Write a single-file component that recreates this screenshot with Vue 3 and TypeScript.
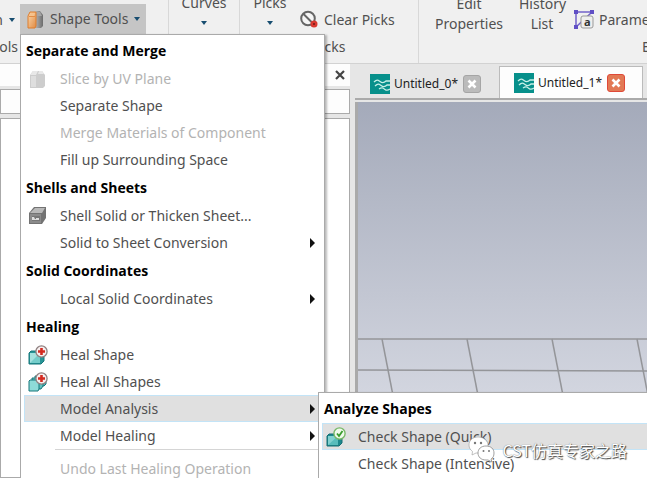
<script setup lang="ts">
import { ref } from 'vue'

interface MenuEntry {
  kind: 'heading' | 'item' | 'separator'
  label?: string
  icon?: 'slice' | 'shell' | 'heal' | 'healAll' | 'check'
  disabled?: boolean
  submenu?: MenuEntry[]
  arrow?: boolean
}

const analysisMenu: MenuEntry[] = [
  { kind: 'heading', label: 'Analyze Shapes' },
  { kind: 'item', label: 'Check Shape (Quick)', icon: 'check' },
  { kind: 'item', label: 'Check Shape (Intensive)' },
]

const shapeMenu: MenuEntry[] = [
  { kind: 'heading', label: 'Separate and Merge' },
  { kind: 'item', label: 'Slice by UV Plane', icon: 'slice', disabled: true },
  { kind: 'item', label: 'Separate Shape' },
  { kind: 'item', label: 'Merge Materials of Component', disabled: true },
  { kind: 'item', label: 'Fill up Surrounding Space' },
  { kind: 'heading', label: 'Shells and Sheets' },
  { kind: 'item', label: 'Shell Solid or Thicken Sheet...', icon: 'shell' },
  { kind: 'item', label: 'Solid to Sheet Conversion', arrow: true },
  { kind: 'heading', label: 'Solid Coordinates' },
  { kind: 'item', label: 'Local Solid Coordinates', arrow: true },
  { kind: 'heading', label: 'Healing' },
  { kind: 'item', label: 'Heal Shape', icon: 'heal' },
  { kind: 'item', label: 'Heal All Shapes', icon: 'healAll' },
  { kind: 'item', label: 'Model Analysis', arrow: true, submenu: analysisMenu },
  { kind: 'item', label: 'Model Healing', arrow: true },
  { kind: 'separator' },
  { kind: 'item', label: 'Undo Last Healing Operation', disabled: true },
]

const openItem = ref('Model Analysis')
const activeCheck = ref('Check Shape (Quick)')
const documents = ref(['Untitled_0*', 'Untitled_1*'])
const activeDocument = ref('Untitled_1*')
const filter = ref('')
const gridLines = [24, 109, 194, 279]
</script>

<template>
  <div class="app">
    <header class="ribbon">
      <section class="group shapes">
        <div class="tools">
          <button class="cut" type="button">n<i class="caret"></i></button>
          <div class="dropdown">
            <button class="shape-tools" type="button">
              <svg width="17" height="19" viewBox="0 0 17 19">
                <defs>
                  <linearGradient id="steel" x2="1"><stop stop-color="#b5b5b5" /><stop offset="1" stop-color="#6c6c6c" /></linearGradient>
                  <linearGradient id="amber" x2="1" y2="1"><stop stop-color="#fbd9ae" /><stop offset="1" stop-color="#e08a42" /></linearGradient>
                </defs>
                <path d="M9 1h4l3 4v11l-2 2H8z" fill="url(#steel)" />
                <path d="M10 2h3l2 4h-5z" fill="#a5a5a5" />
                <path d="M1 6l2-4h6v14l-1 2H1z" fill="url(#amber)" stroke="#dd7c2c" />
                <path d="M2 6l2-3h4L7 6z" fill="#f6c28c" />
                <path d="M2 6.500h6" stroke="#e38c45" />
              </svg>
              Shape Tools<i class="caret"></i>
            </button>
            <div class="menu" role="menu">
              <template v-for="(entry, n) in shapeMenu" :key="n">
                <h3 v-if="entry.kind === 'heading'">{{ entry.label }}</h3>
                <hr v-else-if="entry.kind === 'separator'" />
                <div v-else class="row">
                  <button
                    type="button"
                    role="menuitem"
                    class="item"
                    :class="{ active: entry.label === openItem }"
                    :disabled="entry.disabled"
                    @click="openItem = entry.label ?? ''"
                  >
                    <span class="icon">
                      <svg v-if="entry.icon === 'slice'" width="18" height="20" viewBox="0 0 18 20">
                        <path d="M2 6l3-4h9l3 4v11l-2 2H2z" fill="#cdcdcd" />
                        <path d="M2 6l3-4h5L8 6zM10 5l1-3h3l2 3z" fill="#e8e8e8" />
                        <path d="M3 7h5v11H3z" fill="#dedede" />
                      </svg>
                      <svg v-else-if="entry.icon === 'shell'" width="20" height="20" viewBox="0 0 20 20">
                        <path d="M1 7l5-6h12v11l-4 6H1z" fill="#737373" />
                        <path d="M2 7l5-5h10l-3 5z" fill="#b9b9b9" />
                        <path d="M2 8h11v9H2z" fill="#8b8b8b" />
                        <path d="M4 10h8v5H4z" fill="#777" />
                        <path d="M4 14v-3h2l1 2h1v-1h3v2z" fill="#ddd" />
                      </svg>
                      <svg v-else-if="entry.icon" width="20" height="20" viewBox="0 0 20 20">
                        <template v-if="entry.icon === 'healAll'">
                          <path d="M7 4h11v8l-2 2H7z" fill="#4cb5b5" stroke="#17777b" />
                          <path d="M4 6h11v8l-2 3H4z" fill="#5fc1bf" stroke="#17777b" />
                          <path d="M1 9l1-1h9v9l-1 2H1z" fill="#8edbd8" stroke="#17777b" />
                        </template>
                        <template v-else>
                          <path d="M1 8l2-2h13v10l-3 3H1z" fill="#279496" stroke="#17777b" />
                          <path d="M2 8h10v10H2z" fill="#75cdca" />
                          <path d="M2 18V8h10z" fill="#a5e2df" />
                        </template>
                        <circle cx="13.500" cy="6.500" r="5.600" fill="#f7eeee" stroke="#8e8080" stroke-width="1.300" />
                        <path d="M13.500 3v7M10 6.500h7" stroke="#d42a20" stroke-width="2.600" />
                      </svg>
                    </span>
                    <span class="text">{{ entry.label }}</span>
                    <i v-if="entry.arrow" class="arrow"></i>
                  </button>
                  <div v-if="entry.submenu && entry.label === openItem" class="menu submenu" role="menu">
                    <template v-for="sub in entry.submenu" :key="sub.label">
                      <h3 v-if="sub.kind === 'heading'">{{ sub.label }}</h3>
                      <button
                        v-else
                        type="button"
                        role="menuitem"
                        class="item"
                        :class="{ active: sub.label === activeCheck }"
                        @click="activeCheck = sub.label ?? ''"
                      >
                        <span class="icon">
                          <svg v-if="sub.icon" width="20" height="20" viewBox="0 0 20 20">
                            <path d="M1 9l2-2h13v9l-3 3H1z" fill="#1d888c" stroke="#176f75" />
                            <path d="M2 9h10v9H2z" fill="#58bcbc" />
                            <path d="M2 18V9h10z" fill="#82d1cf" />
                            <circle cx="13.500" cy="6.500" r="5.600" fill="#f0faeb" stroke="#78b868" stroke-width="1.400" />
                            <path d="M11 6.500l2 2.500 3.500-5" fill="none" stroke="#399c2c" stroke-width="1.800" />
                          </svg>
                        </span>
                        <span class="text">{{ sub.label }}</span>
                      </button>
                    </template>
                  </div>
                </div>
              </template>
            </div>
          </div>
        </div>
        <span class="caption">Tools</span>
      </section>
      <section class="group curves">
        <button class="tall" type="button">Curves<i class="caret"></i></button>
      </section>
      <section class="group picks">
        <div class="tools">
          <button class="tall" type="button">Picks<i class="caret"></i></button>
          <button class="wide" type="button">
            <svg width="19" height="19" viewBox="0 0 19 19">
              <circle cx="8" cy="8.500" r="6.800" fill="#f5f5f5" stroke="#666" stroke-width="2" />
              <path d="M3.500 4l9 9" stroke="#666" stroke-width="2" />
              <circle cx="14" cy="14" r="3.500" fill="#d93830" />
              <circle cx="14" cy="14" r="1" fill="#6b1717" />
            </svg>
            Clear Picks
          </button>
        </div>
        <span class="caption">Picks</span>
      </section>
      <section class="group edit">
        <div class="tools">
          <button class="tall properties" type="button">Edit<br />Properties</button>
          <button class="tall history" type="button">History<br />List</button>
          <button class="wide" type="button">
            <svg width="20" height="21" viewBox="0 0 20 21">
              <path d="M2 3h16L2 18z" fill="none" stroke="#7161c9" stroke-width="1.500" />
              <path d="M0 1h4v4H0zM16 1h4v4h-4zM0 16h4v4H0z" fill="#604fc5" />
              <rect x="7" y="7" width="12" height="12" rx="2" fill="#eee" stroke="#999" />
              <text x="10" y="17" class="glyph">a</text>
            </svg>
            Parameters
          </button>
        </div>
        <span class="caption">Edit</span>
      </section>
    </header>

    <main class="workspace">
      <aside class="panel">
        <div class="panel-title">
          <button type="button" aria-label="Close panel">
            <svg width="10" height="10" viewBox="0 0 10 10"><path d="M1 1l8 8M9 1L1 9" stroke="#444" stroke-width="2.200" /></svg>
          </button>
        </div>
        <input v-model="filter" class="filter" type="text" aria-label="Filter tree" />
        <div class="tree"></div>
      </aside>
      <section class="document">
        <nav class="tabs">
          <div v-for="name in documents" :key="name" class="tab" :class="{ current: name === activeDocument }">
            <button class="tab-name" type="button" @click="activeDocument = name">
              <svg width="20" height="20" viewBox="0 0 20 20">
                <path d="M0 0h20v20H0z" fill="#07908b" />
                <path
                  d="M4 8c3-3 4-2 6-.500s4 1.500 6-.500h4M5 12c3-3 4-2 6-.500s4 1.500 6-.500h3M9 15c3-2 4-1 6 .500s3 1 5-.500"
                  fill="none" stroke="#c8f0e8" stroke-width="1.300"
                />
              </svg>
              {{ name }}
            </button>
            <button class="tab-close" type="button" :aria-label="`Close ${name}`">
              <svg width="10" height="10" viewBox="0 0 10 10"><path d="M1.500 1.500l7 7M8.500 1.500l-7 7" stroke="#fff" stroke-width="2.600" /></svg>
            </button>
          </div>
        </nav>
        <div class="viewport">
          <svg width="100%" height="100%" stroke="#949599" stroke-width="1.500">
            <line x1="0" y1="237" x2="100%" y2="237" />
            <line x1="0" y1="268" x2="100%" y2="269" />
            <line v-for="x in gridLines" :key="x" :x1="x" y1="237" :x2="x + 30" y2="391" />
          </svg>
        </div>
      </section>
    </main>

    <div class="watermark">
      <svg width="28" height="28" viewBox="0 0 28 28">
        <path d="M10 1C4.500 1 1 4.500 1 9c0 3 1.500 5 3.500 6.500L4 19l4-2h4c5-1 8-4 8-8s-4-8-10-8z" fill="#fff" stroke="#999" stroke-width=".6" />
        <path d="M18 10c-5 0-8 3-8 7s3 7 8 7h2l4 2-1-3c2-1 3-3 3-6 0-4-3-7-8-7z" fill="#fff" stroke="#888" stroke-width=".8" />
        <g fill="#777"><circle cx="7" cy="7" r="1.200" /><circle cx="13" cy="7" r="1.200" /><circle cx="15.500" cy="15" r="1" /><circle cx="21" cy="15" r="1" /></g>
      </svg>
      <span>CST仿真专家之路</span>
    </div>
  </div>
</template>

<style>
body {
  margin: 0;
  overflow: hidden;
}
</style>

<style scoped>
.app {
  position: relative;
  display: flex;
  flex-direction: column;
  height: 100vh;
  overflow: hidden;
  background: #e6e6e6;
  color: #505050;
  font: 14px/20px 'Noto Sans', 'Open Sans', sans-serif;
}
* {
  box-sizing: border-box;
}
button {
  margin: 0;
  padding: 0;
  border: 0;
  background: none;
  color: inherit;
  font: inherit;
  white-space: nowrap;
}
svg {
  display: block;
  flex: none;
}
.ribbon {
  display: flex;
  flex: none;
  height: 64px;
  background: #f0f0f0;
  border-bottom: 1px solid #d2d2d2;
}
.group {
  display: flex;
  flex: none;
  flex-direction: column;
  justify-content: space-between;
  padding-bottom: 6px;
  border-right: 1px solid #d8d8d8;
}
.shapes {
  width: 169px;
}
.curves {
  width: 71px;
}
.picks {
  width: 179px;
}
.edit {
  flex: 1 0 460px;
  border: 0;
}
.tools {
  display: flex;
  height: 35px;
}
.caption {
  text-align: center;
}
.shapes .caption {
  align-self: flex-start;
  width: 18px;
  direction: rtl;
  white-space: nowrap;
  overflow: hidden;
}
.caret {
  display: block;
  width: 0;
  border: 3px solid transparent;
  border-top: 4px solid #174d70;
  border-bottom: 0;
}
.cut {
  display: flex;
  align-items: center;
  justify-content: flex-end;
  gap: 6px;
  width: 20px;
  height: 31px;
  margin-top: 4px;
  padding-right: 5px;
}
.dropdown {
  position: relative;
}
.shape-tools {
  display: flex;
  align-items: center;
  gap: 6px;
  height: 30px;
  margin-top: 4px;
  padding: 0 6px 0 7px;
  background: #c5c5c5;
}
.tall {
  display: flex;
  flex-direction: column;
  align-items: center;
  justify-content: flex-start;
  gap: 8px;
  width: 60px;
  margin-top: -7px;
}
.curves .tall {
  width: 100%;
}
.wide {
  display: flex;
  align-items: center;
  gap: 5px;
  height: 31px;
  margin-top: 4px;
}
.tall.properties,
.tall.history {
  display: block;
}
.tall.properties {
  width: 100px;
}
.tall.history {
  width: 46px;
  margin-right: 9px;
}
.edit .caption {
  margin-left: 223px;
  text-align: left;
}
.glyph {
  fill: #333;
  stroke: none;
  font: bold 11px 'Open Sans', sans-serif;
}
.menu {
  position: absolute;
  z-index: 2;
  top: 34px;
  left: 0;
  width: 305px;
  height: 480px;
  padding: 1px 0 0 3px;
  background: #fff;
  border: 1px solid #aaa;
  box-shadow: 2px 1px 2px #0004;
}
.menu h3 {
  margin: 0;
  padding-left: 2px;
  color: #000;
  font-family: 'Open Sans', sans-serif;
  font-size: 14px;
  font-weight: 700;
  line-height: 29px;
}
.menu hr {
  height: 1px;
  margin: 0 0 5px 31px;
  border: 0;
  background: #d5d5d5;
}
.row {
  position: relative;
}
.item {
  display: flex;
  align-items: center;
  width: 100%;
  height: 27px;
  padding-right: 9px;
  border: 1px solid transparent;
  border-right: 0;
  text-align: left;
}
.item.active {
  background: #e0e0e0;
  border-color: #c3e4f7;
}
.item:disabled {
  color: #b3b3b3;
}
.icon {
  flex: none;
  width: 35px;
  padding-left: 3px;
}
.text {
  flex: 1;
}
.arrow {
  width: 0;
  border: 5px solid transparent;
  border-left-color: #111;
  border-right: 0;
}
.submenu {
  top: -3px;
  left: 294px;
  width: 400px;
  height: 200px;
}
.workspace {
  display: flex;
  flex: 1;
  min-height: 0;
}
.panel {
  display: flex;
  flex: none;
  flex-direction: column;
  width: 350px;
}
.panel-title {
  display: flex;
  flex: none;
  align-items: center;
  justify-content: flex-end;
  height: 22px;
  padding-right: 5px;
  background: #fdfdfd;
}
.filter {
  flex: none;
  width: 100%;
  height: 25px;
  margin: 3px 0 4px;
  background: #fdfdfd;
  border: 1px solid #aaa;
  border-radius: 0;
}
.tree {
  flex: 1;
  background: #fff;
  border: 1px solid #aaa;
}
.document {
  display: flex;
  flex: 1;
  flex-direction: column;
  min-width: 0;
  padding-left: 5px;
}
.tabs {
  display: flex;
  flex: none;
  height: 36px;
  padding-top: 2px;
  border-bottom: 2px solid #aaa;
}
.tab {
  display: flex;
  align-items: center;
  gap: 5px;
  width: 144px;
  padding: 3px 0 0 15px;
  color: #222;
  font-size: 12px;
}
.tab.current {
  padding: 0 0 0 14px;
  background: #fdfdfd;
  border: 1px solid #bbb;
  border-bottom: 0;
}
.tab-name {
  display: flex;
  align-items: center;
  gap: 4px;
}
.tab-close {
  display: grid;
  place-items: center;
  width: 18px;
  height: 18px;
  background: #bbb;
  border: 1px solid #a5a5a5;
  border-radius: 3px;
}
.current .tab-close {
  background: #e27955;
  border-color: #df4938;
}
.viewport {
  flex: 1;
  min-height: 0;
  margin-top: 2px;
  background: linear-gradient(#a4aaba, #d2d5df 290px);
  border-left: 3px solid #aaa;
}
.watermark {
  position: absolute;
  z-index: 5;
  right: 20px;
  bottom: 14px;
  display: flex;
  align-items: center;
  gap: 6px;
  color: #fff;
  font: 16px/28px 'Noto Sans CJK SC', sans-serif;
  text-shadow: 1px 1px 1px #444, 0 0 1px #666;
}
</style>
